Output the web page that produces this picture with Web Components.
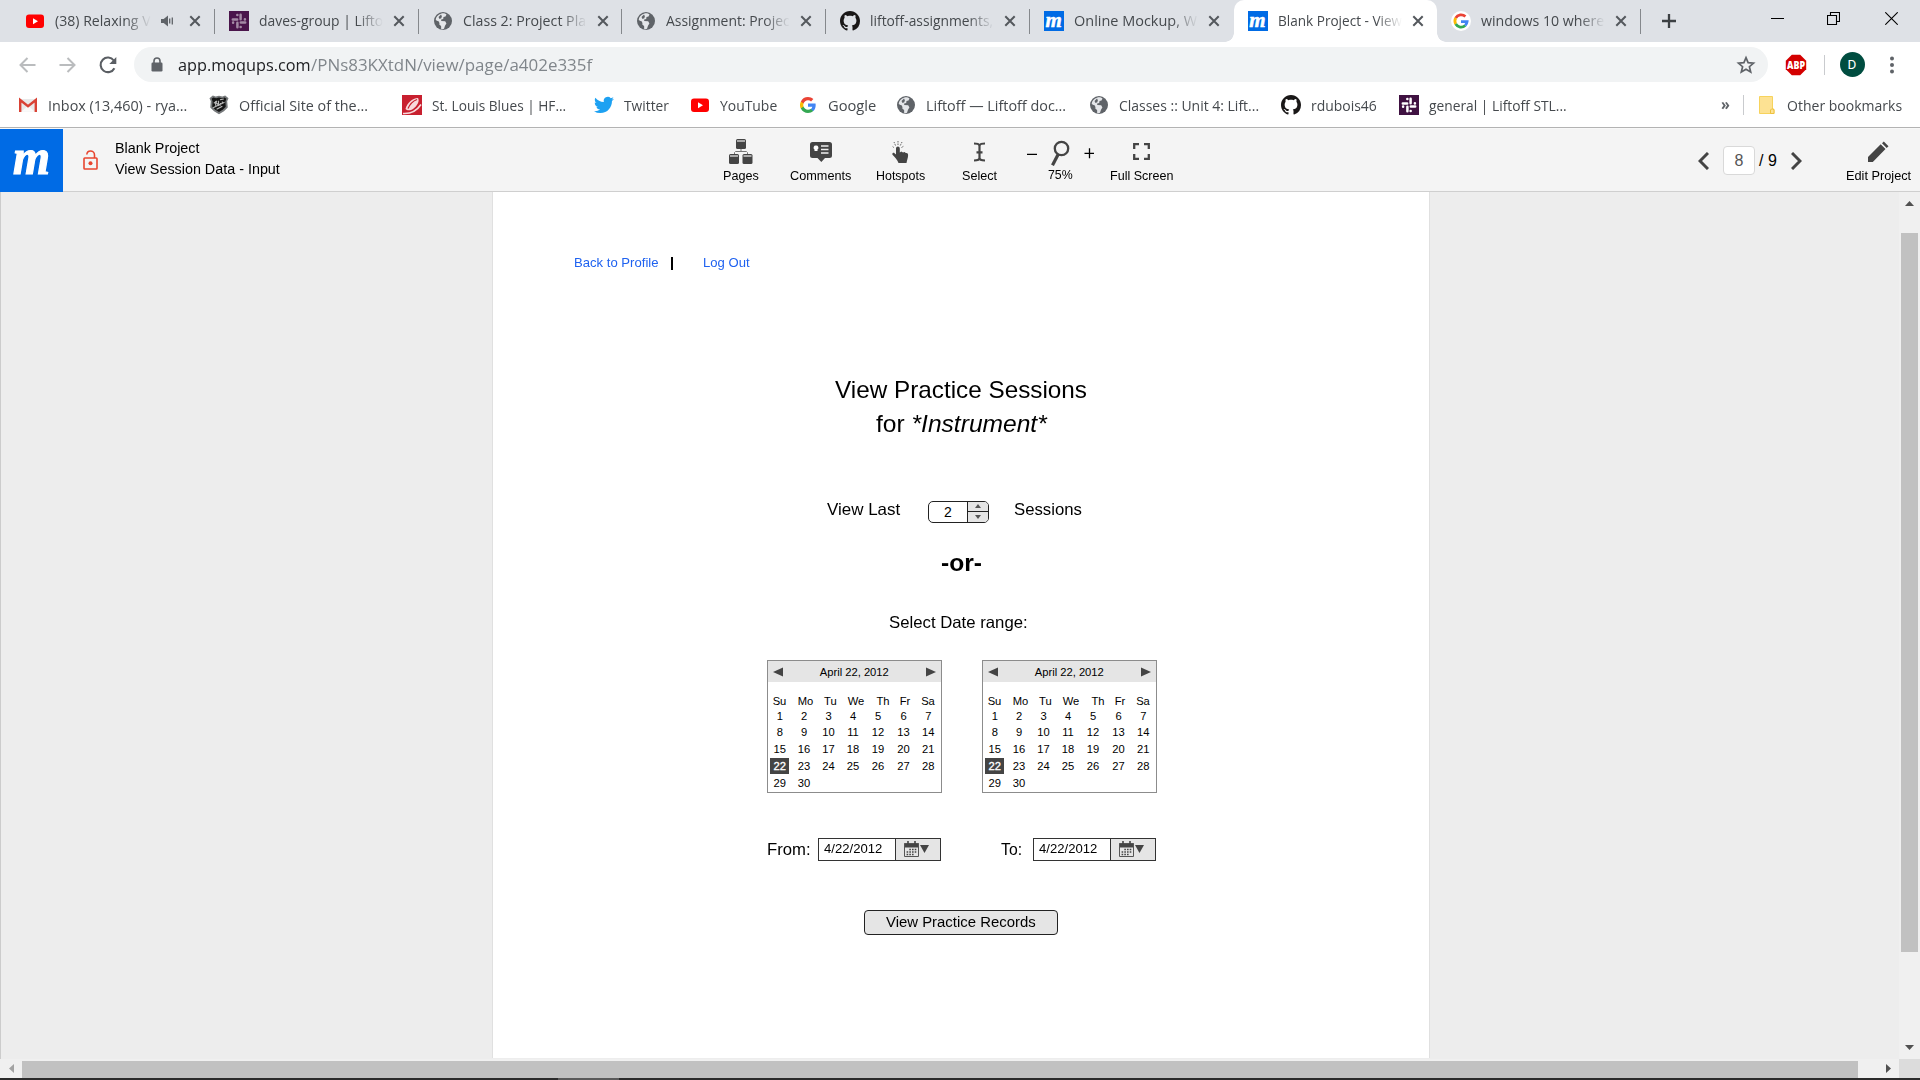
<!DOCTYPE html>
<html lang="en">
<head>
<meta charset="utf-8">
<title>Blank Project - View Session Data - Input</title>
<style>
html,body{margin:0;width:1920px;height:1080px;overflow:hidden;background:#ededed;font-family:"Liberation Sans",Arial,sans-serif}
</style>
</head>
<body>
<app-window></app-window>
<script>
const define=(name,render,after)=>customElements.define(name,class extends HTMLElement{
  connectedCallback(){
    if(this.shadowRoot)return;
    const t=document.createElement('template');
    t.innerHTML=render(n=>this.getAttribute(n),this);
    this.attachShadow({mode:'open'}).appendChild(t.content.cloneNode(true));
    if(after)after(this);
  }
});
const svg=(w,h,body,vb)=>`<svg width="${w}" height="${h}" viewBox="${vb||`0 0 ${w} ${h}`}" fill="none">${body}</svg>`;
const slack=(bg,fg)=>svg(20,20,`<path fill="${bg}" d="M0 0h20v20H0z"/><g stroke="${fg}" stroke-width="2.500" stroke-linecap="round"><path d="M11.600 3.800v4.400M11.800 11.600h4.400M8.400 11.800v4.400M3.800 8.400h4.400M8.300 4.100h.1M15.900 8.300v.1M11.700 15.900h-.1M4.100 11.700v-.1"/></g>`);
const icons={
  youtube:svg(20,20,`<rect x="1" y="3.500" width="18" height="13.500" rx="3" fill="#f00"/><path d="M8 7.200v6l5-3z" fill="#fff"/>`),
  slack:slack('#4a154b','#a48aa5'),
  slackwhite:slack('#3f1141','#fff'),
  globe:svg(20,20,`<circle cx="10" cy="10" r="9" fill="#5f6368"/><path fill="#e4e6e9" d="M8.500 2.500c2-.5 4 .2 5 1l-1 2-2 .6-.3 2-2 .5 0 1.300 4 .3 1.200 2.300-1.400 2.300-1 3c-1.300.6-2 .6-2.800.5l-.1-3.300-2.200-1.700.3-2.200L2.700 9c.2-3 2.300-5.800 5.800-6.500z"/><path fill="#5f6368" d="M8 3.500L5.500 6l1 2 1.800-.8.6-2zM3 10l2.500.6 1 2-.5 2z"/>`),
  github:svg(20,20,`<path transform="scale(1.25)" fill="#191717" fill-rule="evenodd" d="M8 0C3.580 0 0 3.580 0 8c0 3.540 2.290 6.530 5.470 7.590.4.070.55-.17.55-.38 0-.19-.01-.82-.01-1.490-2.010.37-2.530-.49-2.690-.94-.09-.23-.48-.94-.82-1.130-.28-.15-.68-.52-.01-.53.63-.01 1.080.58 1.230.82.72 1.210 1.870.87 2.330.66.070-.52.280-.87.510-1.070-1.780-.2-3.640-.89-3.640-3.950 0-.87.310-1.590.82-2.150-.08-.2-.36-1.020.080-2.120 0 0 .67-.21 2.200.82.64-.18 1.320-.27 2-.27s1.360.090 2 .27c1.530-1.040 2.200-.82 2.200-.82.44 1.100.16 1.920.080 2.120.51.56.82 1.270.82 2.150 0 3.070-1.870 3.750-3.650 3.950.29.250.54.730.54 1.480 0 1.070-.01 1.930-.01 2.200 0 .21.150.46.550.38A8.010 8.010 0 0 0 16 8c0-4.420-3.580-8-8-8z"/>`),
  google:svg(16,16,`<path fill="#4285f4" d="M17.640 9.200c0-.64-.06-1.250-.16-1.840H9v3.480h4.840a4.140 4.140 0 0 1-1.800 2.720v2.260h2.920c1.700-1.570 2.680-3.880 2.680-6.620z"/><path fill="#34a853" d="M9 18c2.430 0 4.470-.8 5.960-2.180l-2.920-2.260c-.8.540-1.840.86-3.040.86-2.340 0-4.330-1.580-5.040-3.710H.96v2.330A9 9 0 0 0 9 18z"/><path fill="#fbbc05" d="M3.960 10.710a5.400 5.400 0 0 1 0-3.420V4.960H.96a9 9 0 0 0 0 8.080z"/><path fill="#ea4335" d="M9 3.580c1.320 0 2.500.45 3.440 1.350l2.580-2.590C13.460.9 11.430 0 9 0A9 9 0 0 0 .96 4.960l3 2.330C4.670 5.160 6.660 3.580 9 3.580z"/>`,'0 0 18 18'),
  googlebadge:svg(20,20,`<circle cx="10" cy="10" r="10" fill="#fff"/><g fill="none" stroke-width="2.800"><path stroke="#ea4335" d="M4.700 7A6.200 6.200 0 0 1 14.400 5.600"/><path stroke="#fbbc05" d="M4.700 13a6.200 6.200 0 0 1 0-6"/><path stroke="#34a853" d="M4.700 13a6.200 6.200 0 0 0 9.500 1.500"/><path stroke="#4285f4" d="M14.200 14.500a6.200 6.200 0 0 0 1.900-3.800H10"/></g>`),
  gmail:svg(20,20,`<path fill="#e9e9e9" d="M1.500 4h17v12.500h-17z"/><path fill="#fafafa" d="M3.500 16.500L10 10.500l6.500 6z"/><path fill="none" stroke="#d94235" stroke-width="2.400" d="M2.200 17V5L10 11.200 17.800 5v12"/>`),
  nhl:svg(21,20,`<path fill="#777a7c" d="M4 0l3 1.200 3.500-1L14 1.200 17 0l3.500 3-1.400 3 .6 6.500-4 4-5.200 3.300-5.200-3.300-4-4L1.900 6 .5 3z"/><path fill="#151515" d="M4.500 2l3 1 3-1 3 1 3-1 1.800 1.500-1.100 2.700.4 5.700-3.200 3-3.900 2.500-3.900-2.500-3.200-3 .4-5.700-1.100-2.700z"/><path stroke="#bbb" stroke-width="1.200" d="M4.300 13l12-6M5 8.200l3.500-2.400m-1.500 5V7l3 3V5.500m2 5V8m2-1.800v2.600m0 2.400l-6 3.300M11.500 4.500l4-.8"/>`),
  blues:svg(20,20,`<path fill="#c8202f" d="M0 0h20v20H0z"/><path fill="#f8d9dc" d="M3.500 14C5 8 10 3.500 16 3c2 3-1 8-5 11-2 1.500-6 2-7.500 0z"/><path stroke="#c8202f" stroke-width="1.300" d="M6 13.500C8 9 11 6 15 4.500"/><path stroke="#f8d9dc" stroke-width="1.600" d="M1 18.500c8 .5 14-3 18-9"/>`),
  twitter:svg(20,20,`<path transform="scale(.833)" fill="#1da1f2" d="M23.950 4.570a10 10 0 0 1-2.820.77 4.960 4.960 0 0 0 2.160-2.720c-.95.55-2 .95-3.130 1.180a4.920 4.920 0 0 0-8.380 4.480C7.690 8.090 4.070 6.130 1.640 3.160a4.820 4.820 0 0 0-.67 2.480c0 1.710.87 3.210 2.190 4.100a4.900 4.900 0 0 1-2.230-.62v.06a4.920 4.920 0 0 0 3.950 4.830 5 5 0 0 1-2.210.08 4.940 4.940 0 0 0 4.600 3.420A9.870 9.870 0 0 1 0 19.540a14 14 0 0 0 7.550 2.210c9.050 0 14-7.500 14-13.980 0-.21 0-.42-.02-.63a9.940 9.940 0 0 0 2.460-2.550z"/>`),
  folder:svg(20,20,`<path fill="#fde293" stroke="#f7d35c" d="M2.500 1.500h13v12.500h1.500v4.500H2.500z"/><path fill="#fde293" stroke="#eec13f" d="M13.500 18.500v-3.500l1-1h1.500l1 1v3.500z"/>`),
  speaker:svg(14,14,`<path fill="#5f6368" d="M1 5h2.700L8 1.500v11L3.700 9H1z"/><path stroke="#5f6368" stroke-width="1.300" d="M9.700 4.500v5M12.300 3.500v7"/>`),
  close:svg(12,12,`<path stroke="#54585d" stroke-width="2" d="M1.300 1.300l9.400 9.400m0-9.400l-9.400 9.400"/>`),
  plus:svg(16,16,`<path stroke="#3c4043" stroke-width="2.300" d="M8 1v14M1 8h14"/>`),
  min:svg(13,13,`<path stroke="#000" d="M0 6.500h13"/>`),
  restore:svg(13,13,`<path stroke="#000" d="M.5 3.500h9v9h-9zM3.500 3.500v-3h9v9h-3" stroke-width="1.100"/>`),
  winclose:svg(13,13,`<path stroke="#000" stroke-width="1.100" d="M.3.300l12.400 12.400M12.700.300L.3 12.700"/>`),
  back:svg(17,16,`<path stroke="#babcbe" stroke-width="2" d="M16.500 8H2M8.500 1L1.500 8l7 7"/>`),
  forward:svg(17,16,`<path stroke="#babcbe" stroke-width="2" d="M.5 8H15M8.500 1l7 7-7 7"/>`),
  reload:svg(18,18,`<path stroke="#5a5e63" stroke-width="2.100" d="M15.400 12.200A7.300 7.300 0 1 1 14.800 4.500"/><path fill="#5a5e63" d="M17.300 1v7h-7z"/>`),
  lock:svg(12,15,`<rect x=".5" y="5.500" width="11" height="9" rx="1.200" fill="#5f6368"/><path stroke="#5f6368" stroke-width="1.600" d="M3 6V4a3 3 0 0 1 6 0v2"/>`),
  star:svg(20,20,`<path stroke="#5f6368" stroke-width="1.700" d="M10 2.700l2.100 5 5.400.5-4.100 3.500 1.300 5.300L10 14.200 5.300 17l1.300-5.300-4.100-3.500 5.400-.5z"/>`),
  abp:svg(22,22,`<path fill="#d40000" d="M6.800.8h8.400l6 6v8.400l-6 6H6.800l-6-6V6.800z"/><text x="11" y="15" text-anchor="middle" font-family="Open Sans" font-size="10.500" font-weight="800" textLength="18" lengthAdjust="spacingAndGlyphs" fill="#fff">ABP</text>`),
  dots:svg(6,18,`<g fill="#5f6368"><circle cx="3" cy="2.500" r="2"/><circle cx="3" cy="9" r="2"/><circle cx="3" cy="15.500" r="2"/></g>`),
  unlock:svg(15,20,`<rect x="1" y="8" width="13" height="11" rx=".8" stroke="#e8452f" stroke-width="1.600"/><path stroke="#e8452f" stroke-width="1.600" d="M3.800 4.500C4 2.300 5.500 1 7.500 1s4 1.500 4 4v3"/><circle cx="7.500" cy="13.300" r="2" fill="#e8452f"/>`),
  pages:svg(24,25,`<g fill="#444"><rect x="7" width="10" height="10" rx="1.500"/><rect y="15" width="10" height="10" rx="1.500"/><rect x="13.500" y="15" width="10" height="10" rx="1.500"/></g><path fill="#aaa" d="M8 1h8v2H8zM1 16h8v2H1zM14.500 16h8v2h-8z"/><path stroke="#777" d="M12 10v2.500M5.500 15v-1.500l1-1h11l1 1V15"/>`),
  comments:svg(22,20,`<path fill="#444" d="M2.500 0h17A2.500 2.500 0 0 1 22 2.500v11a2.500 2.500 0 0 1-2.500 2.500H15l-3.700 4-3.800-4h-5A2.500 2.500 0 0 1 0 13.500v-11A2.500 2.500 0 0 1 2.500 0z"/><path fill="#fff" d="M6 3.500a2.200 2.200 0 0 1 1.500 4V9h-3V7.500a2.200 2.200 0 0 1 1.500-4z"/><path stroke="#eee" stroke-width="1.300" d="M11 4h7.500M11 7.500h7.500M11 11h7.500"/>`),
  hotspots:svg(17,23,`<path fill="#444" d="M4 8.500a1.900 1.900 0 0 1 3.800 0v4l1.500-1 1.700 1 1.600-.6 1.200 1.200c1.500-.3 2.300.5 2.300 1.900 0 3-1 4.500-1.600 8h-8c-1-3-4-6-6-8.200-.8-1.300.8-2.700 2-1.600L4 14.500z"/><g stroke="#666" stroke-dasharray="1.500 1"><path d="M6 5V1M3.500 5.500L2 2M1.800 7.500L0 6M8.300 5.500L10 2M9.500 7.500L12 6"/></g>`),
  select:svg(13,20,`<path stroke="#444" stroke-width="2.200" d="M1 1.500c3 0 5.500.3 5.500 2.500v12c0 2.200-2.500 2.500-5.500 2.500M12 1.500C9 1.500 6.500 1.800 6.500 4v12c0 2.200 2.500 2.500 5.500 2.500M3.500 10.300h6"/>`),
  zoom:svg(19,26,`<circle cx="11" cy="8" r="6.700" stroke="#444" stroke-width="2.300"/><path stroke="#444" stroke-width="3.200" d="M7.600 14L2 24.800"/>`),
  fullscreen:svg(17,17,`<path stroke="#444" stroke-width="2.300" d="M1.200 6V1.200H6M11 1.200h4.800V6M15.800 11v4.800H11M6 15.800H1.200V11"/>`),
  prev:svg(11,18,`<path stroke="#444" stroke-width="3" d="M10 1L2 9l8 8"/>`),
  next:svg(11,18,`<path stroke="#444" stroke-width="3" d="M1 1l8 8-8 8"/>`),
  pencil:svg(21,21,`<path fill="#444" d="M0 21v-5L12.700 3.300l4.800 4.800L4.800 21zM14 2.200L15.800.4l4.700 4.800L18.700 7z"/>`),
  calendar:svg(15,16,`<path fill="#444" d="M0 2.500h15v4H0z"/><path stroke="#555" d="M.5 2.500h14v13H.5z"/><path stroke="#444" stroke-width="1.600" d="M4 0v4M11 0v4"/><g stroke="#444" stroke-width="1.500" stroke-dasharray="1.600 1.100"><path d="M5.300 8.500h7M2.600 11h9.700M2.600 13.500h7"/></g>`),
  al:svg(10,10,`<path fill="#444" d="M10 .5v9L0 5z"/>`),
  ar:svg(10,10,`<path fill="#444" d="M0 .5v9L10 5z"/>`),
  up:svg(6,4,`<path fill="#555" d="M0 4h6L3 0z"/>`),
  down:svg(6,4,`<path fill="#555" d="M0 0h6L3 4z"/>`),
  drop:svg(9,8,`<path fill="#444" d="M0 0h9L4.500 8z"/>`),
  sbup:svg(9,5,`<path fill="#505050" d="M0 5h9L4.500 0z"/>`),
  sbdown:svg(9,5,`<path fill="#505050" d="M0 0h9L4.500 5z"/>`),
  sbleft:svg(5,9,`<path fill="#a3a3a3" d="M5 0v9L0 4.500z"/>`),
  sbright:svg(5,9,`<path fill="#505050" d="M0 0v9l5-4.500z"/>`)
};
define('ui-icon',a=>`<style>:host{display:flex;align-items:center;justify-content:center;flex:none}svg{display:block}</style>${icons[a('name')]}`);

/* One line of text condensed or widened to the width given in w. */
define('fit-text',a=>`<style>:host{display:block;width:${a('w')}px;flex:none;white-space:pre}
span{display:inline-block;transform-origin:0 50%}</style><span><slot></slot></span>`,
 el=>{const s=el.shadowRoot.querySelector('span');s.style.transform=`scaleX(${+el.getAttribute('w')/s.offsetWidth})`;});

define('m-logo',a=>`<style>:host{display:flex;flex:none;align-items:center;justify-content:center;width:${a('size')}px;height:${a('size')}px;background:#006be5;color:#fff}
span{font:italic bold ${a('font')}px/1 "Liberation Serif",serif;-webkit-text-stroke:${a('stroke')}px #fff;transform:translateY(${a('dy')}px) scaleX(${a('sx')||1})}</style><span>m</span>`);

define('browser-tab',a=>`<style>
:host{display:flex;position:relative;box-sizing:border-box;width:203.750px;height:42px;flex:none;align-items:center;padding-left:14px;color:#45494d;font:15px/20px "Open Sans",sans-serif}
ui-icon.f,m-logo{width:20px;height:20px;margin-right:10px}
.t{width:${a('clip')||124}px;padding-bottom:1.500px;-webkit-mask-image:linear-gradient(90deg,#000 calc(100% - 26px),transparent)}
.s{margin-left:9px}
.x{margin-left:${a('audio')!==null?14.5:10}px}
.sep{margin-left:auto;width:1px;height:25px;background:#85888c;margin-top:1px}
:host([nosep]) .sep{visibility:hidden}
:host([active]){background:#fff;border-radius:10px 10px 0 0}
:host([active])::before,:host([active])::after{content:"";position:absolute;bottom:0;width:9px;height:9px}
:host([active])::before{left:-9px;background:radial-gradient(circle at 0 0,transparent 8.500px,#fff 9px)}
:host([active])::after{right:-9px;background:radial-gradient(circle at 100% 0,transparent 8.500px,#fff 9px)}
</style>${a('icon')==='m'?'<m-logo size="20" font="21" stroke=".5" dy="-1.500"></m-logo>':`<ui-icon class="f" name="${a('icon')}"></ui-icon>`}
<div class="t"><fit-text w="${a('w')}">${a('label')}</fit-text></div>
${a('audio')!==null?'<ui-icon class="s" name="speaker"></ui-icon>':''}<ui-icon class="x" name="close"></ui-icon><div class="sep"></div>`);

const tabs=[['youtube','(38) Relaxing V',96,'audio clip="96"'],['slack','daves-group | Lifto',124,''],['globe','Class 2: Project Pla',123,''],['globe','Assignment: Projec',123.5,''],['github','liftoff-assignments,',123.5,''],['m','Online Mockup, W',123.5,'nosep'],['m','Blank Project - View',124,'active nosep'],['googlebadge','windows 10 where',123,'']];
define('tab-strip',()=>`<style>:host{display:flex;height:42px;background:#dee1e6;padding-left:11px;box-sizing:border-box}
.plus{margin-left:19.500px}.w{display:flex;align-items:center;gap:43px;margin-left:auto;padding-right:22px;height:36px}.w ui-icon{width:13px}
.w ui-icon+ui-icon+ui-icon{margin-left:2px}</style>
${tabs.map(t=>`<browser-tab icon="${t[0]}" label="${t[1]}" w="${t[2]}" ${t[3]}></browser-tab>`).join('')}
<ui-icon class="plus" name="plus"></ui-icon><div class="w"><ui-icon name="min"></ui-icon><ui-icon name="restore"></ui-icon><ui-icon name="winclose"></ui-icon></div>`);

define('address-bar',()=>`<style>:host{display:flex;align-items:center;height:45px;background:#fff;padding-left:18px;box-sizing:border-box}
.n{width:18px;margin-right:22.500px}.n2{margin-right:17px}
.o{display:flex;align-items:center;box-sizing:border-box;width:1634px;height:35px;border-radius:18px;background:#f1f3f4;padding:0 12px 0 17px;font:17px/24px "Open Sans",sans-serif;color:#202124}
.o ui-icon:first-child{margin-right:15px}.g{color:#80868b}.o ui-icon:last-child{margin-left:auto}
.a{margin-left:16.500px}.d{width:1px;height:20px;background:#c9cbce;margin-left:17px}
.v{display:flex;align-items:center;justify-content:center;width:25px;height:25px;border-radius:50%;background:#004d40;color:#fff;font:13.500px/1 Roboto,sans-serif;margin-left:15px}
.m{margin-left:24.500px}</style>
<ui-icon class="n" name="back"></ui-icon><ui-icon class="n" name="forward"></ui-icon><ui-icon class="n n2" name="reload"></ui-icon>
<div class="o"><ui-icon name="lock"></ui-icon><fit-text w="133">app.moqups.com</fit-text><fit-text class="g" w="281">/PNs83KXtdN/view/page/a402e335f</fit-text><ui-icon name="star"></ui-icon></div>
<ui-icon class="a" name="abp"></ui-icon><div class="d"></div><div class="v">D</div><ui-icon class="m" name="dots"></ui-icon>`);

define('book-mark',a=>`<style>:host{display:flex;align-items:center;width:${a('box')}px;flex:none;gap:10px;font:15px/20px "Open Sans",sans-serif;color:#45494d}ui-icon{width:20px;height:20px}fit-text{padding-bottom:1px}</style><ui-icon name="${a('icon')}"></ui-icon><fit-text w="${a('w')}">${a('label')}</fit-text>`);
const marks=[['gmail','Inbox (13,460) - rya...',139,191.5],['nhl','Official Site of the...',129,193],['blues','St. Louis Blues | HF...',134,192],['twitter','Twitter',45,95.5],['youtube','YouTube',57.5,108],['google','Google',48,98],['globe','Liftoff — Liftoff doc...',140,193],['globe','Classes :: Unit 4: Lift...',140.5,192],['github','rdubois46',66,118],['slackwhite','general | Liftoff STL...',138,180]];
define('bookmarks-bar',()=>`<style>:host{display:flex;align-items:center;height:41px;padding:0 18.500px 4px 17.500px;box-sizing:border-box;background:#fff;border-bottom:1px solid #b3b3b3}
.more{margin-left:auto;font:bold 16px/20px "Open Sans",sans-serif;color:#5f6368;padding-bottom:3px}.d{width:1px;height:20px;background:#c9cbce;margin:0 13px 0 13px}</style>
${marks.map(m=>`<book-mark icon="${m[0]}" label="${m[1]}" w="${m[2]}" box="${m[3]}"></book-mark>`).join('')}
<fit-text class="more" w="9">»</fit-text><div class="d"></div><book-mark icon="folder" label="Other bookmarks" w="115" box="145"></book-mark>`);

define('tool-button',a=>`<style>:host{display:flex;flex-direction:column;align-items:center;width:79.500px;flex:none;font:13.330px/16px "Liberation Sans",sans-serif;color:#000}
.i{display:flex;align-items:center;justify-content:center;height:29px;margin-bottom:${a('mb')||2}px}</style>
<div class="i"><slot name="icon"><ui-icon name="${a('icon')}"></ui-icon></slot></div><fit-text w="${a('w')}">${a('label')}</fit-text>`);

define('app-header',()=>`<style>:host{display:flex;align-items:flex-start;height:64px;box-sizing:border-box;background:#f4f4f4;border:solid #f8f8f8;border-width:1px 0 0;box-shadow:inset 0 -1px #cfcfcf}
.lock{margin:21px 17px 0 19.500px}.n{font:14px/21px "Liberation Sans",sans-serif;padding-top:8.500px;width:587px}
.tools{display:flex;padding-top:8px}
.z{display:flex;align-items:center;height:29px}
.p{display:flex;align-items:center;height:63px;margin-left:auto;font:16px/20px "Liberation Sans",sans-serif}
.b{display:flex;align-items:center;justify-content:center;box-sizing:border-box;width:32px;height:29px;border:1px solid #d9d9d9;border-radius:4px;background:#fff;color:#555;margin:0 4px 0 14px}
.nx{margin-left:14px}
.e{width:65px;margin:8px 9px 0 44px}.tools tool-button.zm{width:82.500px}</style>
<m-logo size="63" font="50" stroke="1.200" dy="-4" sx=".95"></m-logo><ui-icon class="lock" name="unlock"></ui-icon>
<div class="n"><fit-text w="84">Blank Project</fit-text><fit-text w="165">View Session Data - Input</fit-text></div>
<div class="tools"><tool-button icon="pages" label="Pages" w="36"></tool-button><tool-button icon="comments" label="Comments" w="61"></tool-button><tool-button icon="hotspots" label="Hotspots" w="49.500"></tool-button><tool-button icon="select" label="Select" w="35"></tool-button>
<tool-button class="zm" mb="1" label="75%" w="25"><div slot="icon" class="z">${svg(67,29,'<path stroke="#000" stroke-width="1.300" d="M0 17.300h10M57.500 16.300h10M62.500 11.300v10"/>')}</div></tool-button>
<tool-button icon="fullscreen" label="Full Screen" w="63"></tool-button></div>
<div class="p"><ui-icon name="prev"></ui-icon><div class="b">8</div><fit-text w="18">/ 9</fit-text><ui-icon class="nx" name="next"></ui-icon></div>
<tool-button class="e" icon="pencil" label="Edit Project" w="65"></tool-button>`,
el=>{const s=el.shadowRoot.querySelector('.z svg');s.innerHTML+='<g transform="translate(23.500 3.500)">'+icons.zoom.replace(/^<svg[^>]*>|<\/svg>$/g,'')+'</g>';});

const hx=[11.5,37.5,62.3,88,115,137,160],nx=[11.8,36,60.5,85,110,135.5,160.3];
const cells=(xs,vals)=>{let pos=0;return vals.map((v,i)=>{const w=24,l=xs[i]-12;const m=l-pos;pos=l+w;return `<span style="margin-left:${m}px"${v==='22'?' class="sel"':''}>${v}</span>`;}).join('');};
define('date-calendar',()=>`<style>:host{display:flex;flex-direction:column;box-sizing:border-box;width:174.500px;height:133px;border:1px solid #8c8c8c;background:#fff;font:11.200px/14px "Liberation Sans",sans-serif;color:#000}
.h{display:flex;align-items:center;justify-content:space-between;height:21px;background:#e5e5e5;padding:0 5px}
.r{display:flex;height:14px}.r span{width:24px;text-align:center;flex:none}
.sel{color:#fff;background:linear-gradient(#444,#444) center/19px 100% no-repeat;-webkit-text-stroke:.3px #fff;height:16px;line-height:16px;margin-top:-1px}</style>
<div class="h"><ui-icon name="al"></ui-icon><fit-text w="69">April 22, 2012</fit-text><ui-icon name="ar"></ui-icon></div>
<div class="r" style="margin-top:12px">${cells(hx,['Su','Mo','Tu','We','Th','Fr','Sa'])}</div>
${[[1,1],[8,2],[15,3],[22,3],[29,3]].map(([d,g])=>`<div class="r" style="margin-top:${g}px">${cells(nx,Array.from({length:7},(_,i)=>d+i).filter(v=>v<31).map(String))}</div>`).join('')}`);

define('number-spinner',()=>`<style>:host{display:flex;box-sizing:border-box;width:61px;height:22px;border:1px solid #222;border-radius:5px;overflow:hidden;background:#fff;font:14px/21px "Liberation Sans",sans-serif}
.v{width:38px;text-align:center}.b{flex:1;display:flex;flex-direction:column;border-left:1px solid #222;background:#e5e5e5}.b ui-icon{flex:1}.b ui-icon+ui-icon{border-top:1px solid #222}</style>
<div class="v">2</div><div class="b"><ui-icon name="up"></ui-icon><ui-icon name="down"></ui-icon></div>`);

define('date-field',()=>`<style>:host{display:flex;box-sizing:border-box;width:123px;height:23px;border:1px solid #333;background:#fff;font:13.330px/20px "Liberation Sans",sans-serif}
.v{width:70.500px;padding-left:5px}.b{flex:1;display:flex;align-items:center;gap:1.500px;border-left:1px solid #333;background:#e5e5e5;padding-left:8px}</style>
<div class="v"><fit-text w="58">4/22/2012</fit-text></div><div class="b"><ui-icon name="calendar"></ui-icon><ui-icon name="drop"></ui-icon></div>`);

define('mock-page',()=>`<style>:host{display:block;box-sizing:border-box;width:938px;height:866px;margin-left:491px;background:#fff;border:solid #e0e0e0;border-width:0 1px;font:16.500px/20px "Liberation Sans",sans-serif;color:#000}
.row{display:flex;align-items:flex-start}
.links{font-size:13.500px;color:#1f62f0;padding:61px 0 0 80.500px}.bar{width:2px;height:13px;background:#000;margin:3.500px 30px 0 12.500px}
h1{font:24px/34px "Liberation Sans",sans-serif;margin:99.500px 0 0;display:flex;flex-direction:column;align-items:center}
.last{padding:58px 0 0 334px}number-spinner{margin:2px 25px 0 28px}
.or{font:bold 24px/28px "Liberation Sans",sans-serif;margin:26px 0 0 447.500px}
.sel{margin:35.500px 0 0 396px}
.cal{gap:40.500px;padding:28px 0 0 274px}
.dates{padding:44.500px 0 0 274px}.dates fit-text{margin-top:1px}.f1{margin-left:7.500px}.to{margin-left:60px}.f2{margin-left:11px}
.btn{display:flex;justify-content:center;box-sizing:border-box;width:194px;height:25px;border:1px solid #222;border-radius:4px;background:#e5e5e5;margin:49px 0 0 371px;font-size:15.500px;line-height:22px}</style>
<div class="row links"><fit-text w="84.500">Back to Profile</fit-text><div class="bar"></div><fit-text w="46.500">Log Out</fit-text></div>
<h1><fit-text w="252">View Practice Sessions</fit-text><fit-text w="171">for <i>*Instrument*</i></fit-text></h1>
<div class="row last"><fit-text w="73">View Last</fit-text><number-spinner></number-spinner><fit-text w="68">Sessions</fit-text></div>
<fit-text class="or" w="41">-or-</fit-text><fit-text class="sel" w="139">Select Date range:</fit-text>
<div class="row cal"><date-calendar></date-calendar><date-calendar></date-calendar></div>
<div class="row dates"><fit-text w="43.500">From:</fit-text><date-field class="f1"></date-field><fit-text class="to" w="21">To:</fit-text><date-field class="f2"></date-field></div>
<div class="btn"><fit-text w="150">View Practice Records</fit-text></div>`);

define('scroll-bar',a=>a('dir')==='v'?`<style>:host{display:flex;flex-direction:column;align-items:center;width:21px;height:867px;background:#f0f0f0}
.u{margin-top:9px}.t{width:17px;height:719px;background:#c1c1c1;margin-top:27px}.d{margin-top:93px}</style><ui-icon class="u" name="sbup"></ui-icon><div class="t"></div><ui-icon class="d" name="sbdown"></ui-icon>`
:`<style>:host{display:flex;align-items:center;height:19px;background:#f0f0f0}.t{width:1836px;height:17px;background:#c1c1c1;margin:2px 28px 0 8px}.c{width:21px;height:19px;background:#dcdcdc;margin-left:auto}.l{margin-left:9px}</style>
<ui-icon class="l" name="sbleft"></ui-icon><div class="t"></div><ui-icon name="sbright"></ui-icon><div class="c"></div>`);

define('app-window',()=>`<style>:host{display:flex;flex-direction:column;width:1920px;height:1080px}
.c{display:flex;justify-content:space-between;height:867px;background:#ededed;border-left:1px solid #ccc}
.task{display:flex;height:2px;background:#2b2b2b;padding-left:558px}.task i{width:61px;background:#5a5a5a}</style>
<tab-strip></tab-strip><address-bar></address-bar><bookmarks-bar></bookmarks-bar><app-header></app-header>
<div class="c"><mock-page></mock-page><scroll-bar dir="v"></scroll-bar></div><scroll-bar dir="h"></scroll-bar><div class="task"><i></i></div>`);
</script>
</body>
</html>
